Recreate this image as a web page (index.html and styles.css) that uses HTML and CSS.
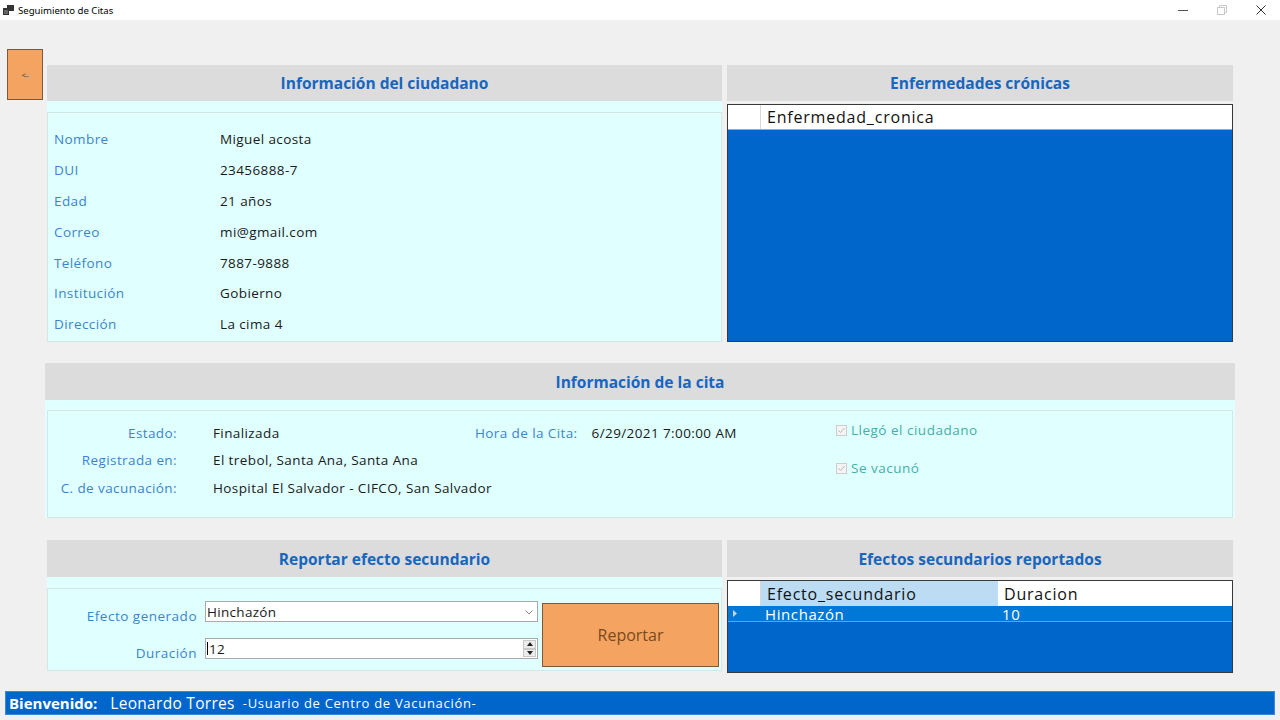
FILE: index.html
```html
<!DOCTYPE html>
<html lang="es">
<head>
<meta charset="utf-8">
<title>Seguimiento de Citas</title>
<link rel="stylesheet" href="styles.css">
</head>
<body>
<div class="titlebar">
  <div class="tb-left">
    <svg class="app-icon" width="11" height="10" viewBox="0 0 11 10"><rect x="4" y="0" width="7" height="6" fill="#333"/><rect x="0" y="3" width="6" height="7" fill="#333"/><rect x="1" y="5" width="4" height="4" fill="#666"/></svg>
    <span class="tb-title">Seguimiento de Citas</span>
  </div>
  <div class="tb-controls">
    <span class="ctl"><svg width="10" height="10" viewBox="0 0 10 10"><line x1="0" y1="5.5" x2="10" y2="5.5" stroke="#555" stroke-width="1"/></svg></span>
    <span class="ctl"><svg width="10" height="10" viewBox="0 0 10 10"><rect x="0.5" y="2.5" width="7" height="7" fill="none" stroke="#c8c8c8"/><path d="M2.5 2.5V0.5H9.5V7.5H7.5" fill="none" stroke="#c8c8c8"/></svg></span>
    <span class="ctl"><svg width="10" height="10" viewBox="0 0 10 10"><path d="M0.5 0.5L9.5 9.5M9.5 0.5L0.5 9.5" stroke="#333" stroke-width="1"/></svg></span>
  </div>
</div>

<div class="window">
  <div class="content">
    <div class="side">
      <button class="back-btn">&lt;-</button>
    </div>
    <div class="panels">
      <div class="row1">
        <section class="panel">
          <h2 class="panel-head">Información del ciudadano</h2>
          <div class="panel-body">
            <div class="box info-box">
              <div class="info-row"><span class="lbl">Nombre</span><span class="val">Miguel acosta</span></div>
              <div class="info-row"><span class="lbl">DUI</span><span class="val">23456888-7</span></div>
              <div class="info-row"><span class="lbl">Edad</span><span class="val">21 años</span></div>
              <div class="info-row"><span class="lbl">Correo</span><span class="val">mi@gmail.com</span></div>
              <div class="info-row"><span class="lbl">Teléfono</span><span class="val">7887-9888</span></div>
              <div class="info-row"><span class="lbl">Institución</span><span class="val">Gobierno</span></div>
              <div class="info-row"><span class="lbl">Dirección</span><span class="val">La cima 4</span></div>
            </div>
          </div>
        </section>
        <section class="panel">
          <h2 class="panel-head">Enfermedades crónicas</h2>
          <div class="grid grid-tall">
            <div class="grid-header">
              <span class="rowhead"></span>
              <span class="colhead">Enfermedad_cronica</span>
            </div>
          </div>
        </section>
      </div>

      <section class="panel cita">
        <h2 class="panel-head">Información de la cita</h2>
        <div class="panel-body cita-body">
          <div class="box cita-box">
            <div class="cita-col1">
              <span class="lbl">Estado:</span><span class="val">Finalizada</span>
              <span class="lbl">Registrada en:</span><span class="val">El trebol, Santa Ana, Santa Ana</span>
              <span class="lbl">C. de vacunación:</span><span class="val">Hospital El Salvador - CIFCO, San Salvador</span>
            </div>
            <div class="cita-col2">
              <span class="lbl">Hora de la Cita:</span><span class="val">6/29/2021 7:00:00 AM</span>
            </div>
            <div class="cita-col3">
              <label class="chk"><span class="chkbox"><svg width="9" height="9" viewBox="0 0 9 9"><path d="M1.5 4.5L3.5 6.5L7.5 2" fill="none" stroke="#b8b8b8" stroke-width="1"/></svg></span>Llegó el ciudadano</label>
              <label class="chk"><span class="chkbox"><svg width="9" height="9" viewBox="0 0 9 9"><path d="M1.5 4.5L3.5 6.5L7.5 2" fill="none" stroke="#b8b8b8" stroke-width="1"/></svg></span>Se vacunó</label>
            </div>
          </div>
        </div>
      </section>

      <div class="row3">
        <section class="panel">
          <h2 class="panel-head">Reportar efecto secundario</h2>
          <div class="panel-body">
            <div class="box report-box">
              <div class="report-form">
                <span class="lbl">Efecto generado</span>
                <div class="field select">Hinchazón<svg class="caret" width="8" height="5" viewBox="0 0 8 5"><path d="M0.5 0.5L4 4L7.5 0.5" fill="none" stroke="#888"/></svg></div>
                <span class="lbl">Duración</span>
                <div class="field spin"><span class="cursor"></span>12<span class="spinner"><span class="sp-up"><svg width="6" height="4" viewBox="0 0 6 4"><path d="M0 4L3 0L6 4Z" fill="#222"/></svg></span><span class="sp-down"><svg width="6" height="4" viewBox="0 0 6 4"><path d="M0 0L3 4L6 0Z" fill="#222"/></svg></span></span></div>
              </div>
              <button class="report-btn">Reportar</button>
            </div>
          </div>
        </section>
        <section class="panel">
          <h2 class="panel-head">Efectos secundarios reportados</h2>
          <div class="grid grid-short">
            <div class="grid-header">
              <span class="rowhead"></span>
              <span class="colhead sel">Efecto_secundario</span>
              <span class="colhead">Duracion</span>
            </div>
            <div class="grid-row">
              <span class="rowhead-sel"><svg width="4" height="7" viewBox="0 0 4 7"><path d="M0 0L4 3.5L0 7Z" fill="#222"/></svg></span>
              <span class="cell c1">Hinchazón</span>
              <span class="cell c2">10</span>
            </div>
          </div>
        </section>
      </div>
    </div>
  </div>

  <footer class="statusbar">
    <span class="st-b">Bienvenido:</span>
    <span class="st-name">Leonardo Torres</span>
    <span class="st-role">-Usuario de Centro de Vacunación-</span>
  </footer>
</div>
</body>
</html>
```

FILE: styles.css
```css
* { box-sizing: border-box; }
html, body { margin: 0; padding: 0; }
body {
  width: 1280px;
  height: 720px;
  overflow: hidden;
  background: #f0f0f0;
  font-family: "Open Sans", "Noto Sans", sans-serif;
  color: #1a1a1a;
}

.titlebar {
  height: 20px;
  background: #ffffff;
  display: flex;
  align-items: center;
  justify-content: space-between;
}
.tb-left { display: flex; align-items: center; padding-left: 3px; }
.app-icon { margin-right: 4px; }
.tb-title { font-family: "Noto Sans", sans-serif; font-size: 9.6px; color: #000; }
.tb-controls { display: flex; height: 20px; }
.ctl { width: 39px; display: flex; align-items: center; justify-content: center; }

.window { height: 700px; display: flex; flex-direction: column; }
.content { display: flex; height: 671px; flex: none; }
.side { width: 47px; padding: 29px 0 0 7px; }
.back-btn {
  width: 36px; height: 51px;
  background: #f4a460;
  border: 1px solid #7a5a3a;
  font-family: "Open Sans", sans-serif;
  font-size: 8px;
  color: #333;
  padding: 0;
}

.panels { width: 1186px; padding-top: 45px; }

.row1 {
  display: grid;
  grid-template-columns: 675px 506px;
  column-gap: 5px;
  height: 277px;
}
.panel { display: flex; flex-direction: column; }
.panel-head {
  margin: 0;
  height: 36px;
  background: #dcdcdc;
  color: #1766c0;
  font-size: 15.5px;
  font-weight: 700;
  display: flex;
  align-items: center;
  justify-content: center;
}
.panel-body {
  background: #e0ffff;
  padding-top: 11px;
  flex: 1;
  display: flex;
  flex-direction: column;
}
.box {
  flex: 1;
  border: 1px solid #d4e6e6;
  background: #e0ffff;
}

.lbl { color: #3b85cc; font-size: 13.5px; letter-spacing: 0.4px; white-space: nowrap; }
.val { color: #1a1a1a; font-size: 13.5px; letter-spacing: 0.4px; white-space: nowrap; }

.info-box { padding: 11px 0 0 6px; }
.info-row { display: flex; align-items: center; height: 30.8px; }
.info-row .lbl { width: 166px; }

.grid {
  margin-top: 3px;
  border: 1px solid #3a3a3a;
  background: #0066cc;
  flex: 1;
}
.grid-tall { height: 238px; }
.grid-header { display: flex; height: 25px; background: #ffffff; border-bottom: 1px solid #9ab; }
.rowhead { width: 33px; border-right: 1px solid #d8d8d8; }
.colhead {
  font-size: 16px;
  letter-spacing: 0.8px;
  color: #111;
  padding-left: 6px;
  display: flex;
  align-items: center;
  flex: 1;
}

.cita { margin: 21px 0 0 -2px; width: 1190px; height: 155px; }
.cita .panel-head { height: 37px; }
.cita-body { padding: 10px 2px 0 2px; }
.cita-box {
  display: flex;
  padding-top: 8px;
  height: 108px;
  flex: none;
}
.cita-col1 {
  display: grid;
  grid-template-columns: 129px 262px;
  column-gap: 36px;
  grid-auto-rows: 27.5px;
  align-items: center;
}
.cita-col1 .lbl { text-align: right; }
.cita-col2 {
  display: flex;
  align-items: center;
  height: 27.5px;
  width: 361px;
}
.cita-col2 .lbl { margin-right: 14px; }
.cita-col3 { display: flex; flex-direction: column; gap: 20px; padding-top: 2px; }
.chk {
  display: flex; align-items: center;
  color: #43b0a8;
  font-size: 13.5px;
  letter-spacing: 0.5px;
  height: 18px;
}
.chkbox {
  width: 11px; height: 11px;
  border: 1px solid #cdcdcd;
  background: #f4f4f4;
  margin-right: 4px;
  display: flex; align-items: center; justify-content: center;
}

.row3 {
  margin-top: 22px;
  display: grid;
  grid-template-columns: 675px 506px;
  column-gap: 5px;
  height: 133px;
}
.row3 .panel-head { height: 37px; }
.row3 .panel:first-child { height: 131px; }
.report-box { display: flex; padding-top: 12px; }
.report-form {
  display: grid;
  grid-template-columns: 149px 333px;
  column-gap: 8px;
  row-gap: 16px;
  grid-auto-rows: 21px;
  align-items: center;
}
.report-form .lbl { text-align: right; font-size: 13.5px; letter-spacing: 0.5px; position: relative; top: 4px; }
.field {
  height: 21px;
  background: #fff;
  border: 1px solid #a9a9a9;
  font-size: 13.5px;
  letter-spacing: 0.3px;
  display: flex;
  align-items: center;
  padding-left: 1px;
  position: relative;
}
.caret { position: absolute; right: 4px; top: 8px; }
.cursor { width: 1px; height: 13px; background: #000; margin-right: 1px; }
.spinner {
  position: absolute; right: 1px; top: 1px;
  width: 13px; height: 17px;
  display: flex; flex-direction: column;
}
.sp-up, .sp-down {
  flex: 1;
  background: #ececec;
  border: 1px solid #c8c8c8;
  display: flex; align-items: center; justify-content: center;
}
.report-btn {
  margin: 2px 0 0 4px;
  width: 177px; height: 64px;
  background: #f4a460;
  border: 1px solid #7a5a3a;
  color: #7a4a1e;
  font-family: "Open Sans", sans-serif;
  font-size: 16px;
}

.grid-short { margin-top: 3px; height: 93px; flex: none; }
.grid-short .grid-header { border-bottom: none; }
.colhead.sel { background: #bcdcf4; flex: none; width: 237px; }
.grid-row {
  display: flex;
  height: 16px;
  background: #0078d7;
  border-bottom: 1px solid #5fa0e0;
}
.rowhead-sel {
  width: 33px;
  background: #0078d7;
  display: flex; align-items: center;
  padding-left: 5px;
}
.rowhead-sel svg path { fill: #d0d0d0; }
.cell { color: #fff; font-size: 15px; letter-spacing: 0.6px; line-height: 16px; padding-left: 4px; }
.c1 { width: 237px; }

.statusbar {
  margin: 0 5px;
  height: 24px;
  background: #0066cc;
  border: 1px solid #3a88d8;
  display: flex;
  align-items: center;
  color: #fff;
  padding-left: 3px;
  flex: none;
}
.st-b { font-weight: 700; font-size: 15px; margin-right: 13px; }
.st-name { font-size: 15.5px; letter-spacing: 0.3px; margin-right: 8px; }
.st-role { font-size: 13px; letter-spacing: 0.7px; }
```
